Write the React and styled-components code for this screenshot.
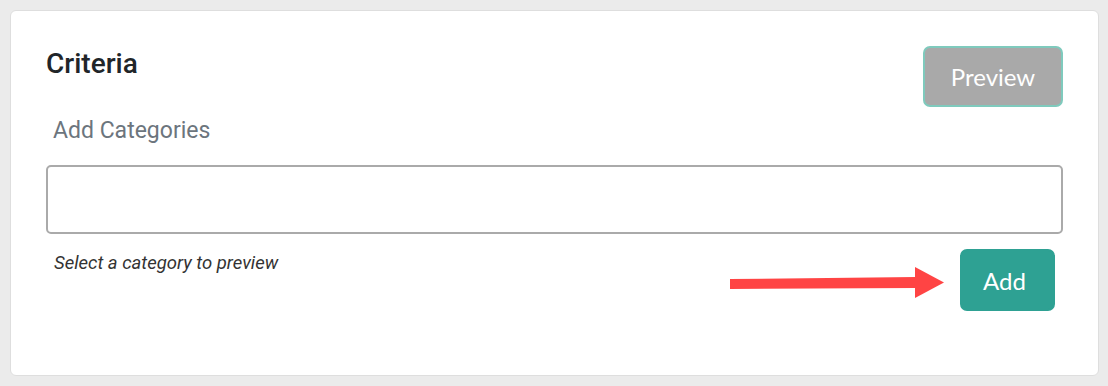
import React from "react";
import styled, { createGlobalStyle } from "styled-components";

const GlobalStyle = createGlobalStyle`
  * { box-sizing: border-box; }
  body {
    margin: 0;
    background: #ebebeb;
    font-family: Roboto, "Liberation Sans", sans-serif;
  }
`;

const Page = styled.div`
  padding: 10px 9px 10px 10px;
`;

const Card = styled.section`
  height: 366px;
  background: #fff;
  border: 1px solid #dedede;
  border-radius: 6px;
  padding: 35px 35px 0 35px;
`;

const Header = styled.div`
  display: flex;
  justify-content: space-between;
  align-items: flex-start;
`;

const Title = styled.h2`
  margin: 2px 0 0;
  font-size: 28px;
  line-height: 32px;
  font-weight: 500;
  color: #212529;
`;

const Button = styled.button`
  font-family: Lato, "Open Sans", sans-serif;
  font-size: 24px;
  color: #fff;
  border-radius: 7px;
  cursor: pointer;
  background: ${(p) => (p.$variant === "muted" ? "#a9a9a9" : "#2ea193")};
  border: 2px solid ${(p) => (p.$variant === "muted" ? "#7fcabd" : "#2ea193")};
  width: ${(p) => p.$w}px;
  height: ${(p) => p.$h}px;
  padding: 0 ${(p) => p.$shift || 0}px 0 0;
`;

const Label = styled.label`
  display: block;
  margin: 10px 0 0 7px;
  font-size: 23px;
  line-height: 27px;
  color: #6c757d;
`;

const Input = styled.input`
  display: block;
  width: 100%;
  height: 69px;
  margin-top: 21px;
  border: 2px solid #aaaaaa;
  border-radius: 5px;
  outline: none;
  font-family: inherit;
  font-size: 18px;
  padding: 0 14px;
`;

const Footer = styled.div`
  display: flex;
  justify-content: space-between;
  align-items: flex-start;
  padding-right: 8px;
`;

const Hint = styled.p`
  margin: 18px 0 0 8px;
  font-size: 18.5px;
  line-height: 22px;
  font-style: italic;
  color: #333;
`;

const Actions = styled.div`
  display: flex;
  align-items: flex-start;
  gap: 15px;
  margin-top: 15px;
`;

const Arrow = styled.svg`
  margin-top: 17px;
  display: block;
`;

export default function App() {
  return (
    <>
      <GlobalStyle />
      <Page>
        <Card>
          <Header>
            <Title>Criteria</Title>
            <Button $variant="muted" $w={140} $h={61}>Preview</Button>
          </Header>
          <Label htmlFor="cats">Add Categories</Label>
          <Input id="cats" />
          <Footer>
            <Hint>Select a category to preview</Hint>
            <Actions>
              <Arrow width="216" height="33" viewBox="0 0 216 33">
                <polygon points="1,13 187,11 187,22 1,23" fill="#ff4444" />
                <polygon points="186,1 215,16.5 186,32" fill="#ff4444" />
              </Arrow>
              <Button $w={95} $h={62} $shift={6}>Add</Button>
            </Actions>
          </Footer>
        </Card>
      </Page>
    </>
  );
}
